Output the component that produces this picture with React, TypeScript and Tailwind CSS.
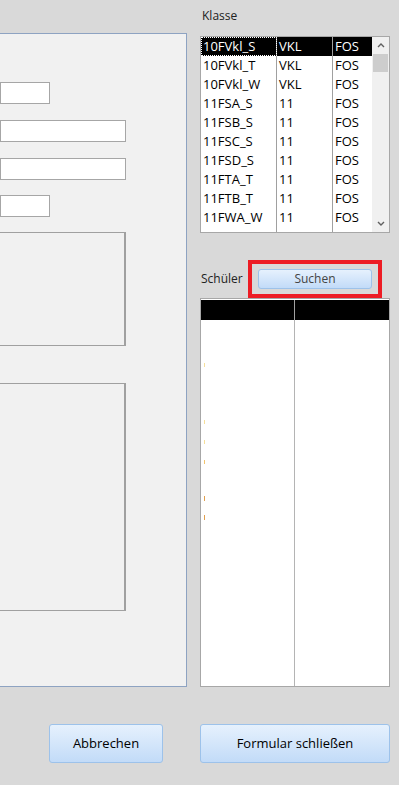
import React from "react";

type Klasse = { name: string; stufe: string; schulart: string };

const klassen: Klasse[] = [
  { name: "10FVkl_S", stufe: "VKL", schulart: "FOS" },
  { name: "10FVkl_T", stufe: "VKL", schulart: "FOS" },
  { name: "10FVkl_W", stufe: "VKL", schulart: "FOS" },
  { name: "11FSA_S", stufe: "11", schulart: "FOS" },
  { name: "11FSB_S", stufe: "11", schulart: "FOS" },
  { name: "11FSC_S", stufe: "11", schulart: "FOS" },
  { name: "11FSD_S", stufe: "11", schulart: "FOS" },
  { name: "11FTA_T", stufe: "11", schulart: "FOS" },
  { name: "11FTB_T", stufe: "11", schulart: "FOS" },
  { name: "11FWA_W", stufe: "11", schulart: "FOS" },
];

const btn =
  "rounded-[3px] border border-[#9dc2ea] bg-gradient-to-b from-[#e6f1fd] to-[#c2dbf8] text-[13px] text-black";

function Chevron({ up }: { up?: boolean }) {
  return (
    <svg width="8" height="5" viewBox="0 0 8 5">
      <path
        d={up ? "M1 4 L4 1 L7 4" : "M1 1 L4 4 L7 1"}
        fill="none"
        stroke="#606060"
        strokeWidth="1.4"
      />
    </svg>
  );
}

export default function App() {
  return (
    <div
      className="w-[399px] h-[785px] bg-[#d9d9d9] overflow-hidden flex flex-col"
      style={{ fontFamily: '"Open Sans", "Noto Sans", sans-serif' }}
    >
      <div className="flex items-start">
        {/* Formular-Bereich */}
        <div className="mt-[33px] w-[187px] h-[654px] border-y border-r border-[#8ea3c2] bg-[#f1f1f1] pt-[48px] flex flex-col">
          <div className="w-[50px] h-[22px] border border-[#a6a6a6] bg-white" />
          <div className="mt-[16px] w-[126px] h-[22px] border border-[#a6a6a6] bg-white" />
          <div className="mt-[16px] w-[126px] h-[22px] border border-[#a6a6a6] bg-white" />
          <div className="mt-[15px] w-[50px] h-[22px] border border-[#a6a6a6] bg-white" />
          <div className="mt-[15px] w-[126px] h-[114px] border-t border-r-2 border-b border-[#a0a0a0]" />
          <div className="mt-[37px] w-[126px] h-[228px] border-t border-r-2 border-b border-[#a0a0a0]" />
        </div>

        {/* Rechte Spalte */}
        <div className="ml-[13px] w-[190px] flex flex-col">
          <div className="h-[36px] pt-[7px] pl-[2px] text-[12px] leading-[17px] text-[#222]">Klasse</div>

          <div className="h-[197px] border border-[#a7a7a7] bg-white flex">
            <div className="w-[171px] flex flex-col">
              {klassen.map((k, i) => (
                <div
                  key={k.name}
                  className={
                    "h-[19px] flex text-[13px] leading-[19px] " +
                    (i === 0 ? "bg-black text-white" : "text-black")
                  }
                >
                  <div
                    className={
                      "w-[76px] pl-[2px] border-r border-[#a0a0a0] " +
                      (i === 0 ? "outline-1 outline-dotted outline-white -outline-offset-1" : "")
                    }
                  >
                    {k.name}
                  </div>
                  <div className="w-[56px] pl-[2px] border-r border-[#a0a0a0]">{k.stufe}</div>
                  <div className="w-[39px] pl-[2px]">{k.schulart}</div>
                </div>
              ))}
              <div className="flex-1 flex">
                <div className="w-[76px] border-r border-[#a0a0a0]" />
                <div className="w-[56px] border-r border-[#a0a0a0]" />
              </div>
            </div>
            <div className="w-[17px] bg-[#f0f0f0] flex flex-col items-center">
              <div className="h-[17px] flex items-center justify-center">
                <Chevron up />
              </div>
              <div className="w-[15px] h-[18px] bg-[#cdcdcd]" />
              <div className="flex-1" />
              <div className="h-[17px] flex items-center justify-center">
                <Chevron />
              </div>
            </div>
          </div>

          <div className="mt-[27px] h-[38px] flex items-center">
            <div className="w-[48px] pl-[1px] text-[12px] text-[#222]">Schüler</div>
            <div className="w-[134px] h-[38px] border-4 border-[#ed1c24] flex items-center justify-center">
              <button className="w-[114px] h-[20px] rounded-[3px] border border-[#9dc2ea] bg-gradient-to-b from-[#e6f1fd] to-[#c2dbf8] text-[12px] leading-[18px] text-[#444]">
                Suchen
              </button>
            </div>
          </div>

          <div className="h-[389px] border border-[#a7a7a7] bg-white flex flex-col">
            <div className="h-[20px] mt-[1px] bg-black flex">
              <div className="w-[94px] border-r border-[#a0a0a0]" />
            </div>
            <div className="flex-1 flex">
              <div className="w-[94px] border-r border-[#b4b4b4] relative">
                <div className="absolute left-[3px] top-[43px] w-[1px] h-[4px] bg-[#f6df9a]" />
                <div className="absolute left-[3px] top-[100px] w-[1px] h-[4px] bg-[#f6df9a]" />
                <div className="absolute left-[3px] top-[120px] w-[1px] h-[4px] bg-[#f6df9a]" />
                <div className="absolute left-[3px] top-[140px] w-[1px] h-[4px] bg-[#f2c46e]" />
                <div className="absolute left-[3px] top-[176px] w-[1px] h-[5px] bg-[#e0a050]" />
                <div className="absolute left-[3px] top-[195px] w-[1px] h-[5px] bg-[#e0a050]" />
              </div>
            </div>
          </div>
        </div>
      </div>

      <div className="mt-[37px] flex">
        <button className={"ml-[49px] w-[114px] h-[39px] " + btn}>Abbrechen</button>
        <button className={"ml-[37px] w-[190px] h-[39px] " + btn}>Formular schließen</button>
      </div>
    </div>
  );
}
